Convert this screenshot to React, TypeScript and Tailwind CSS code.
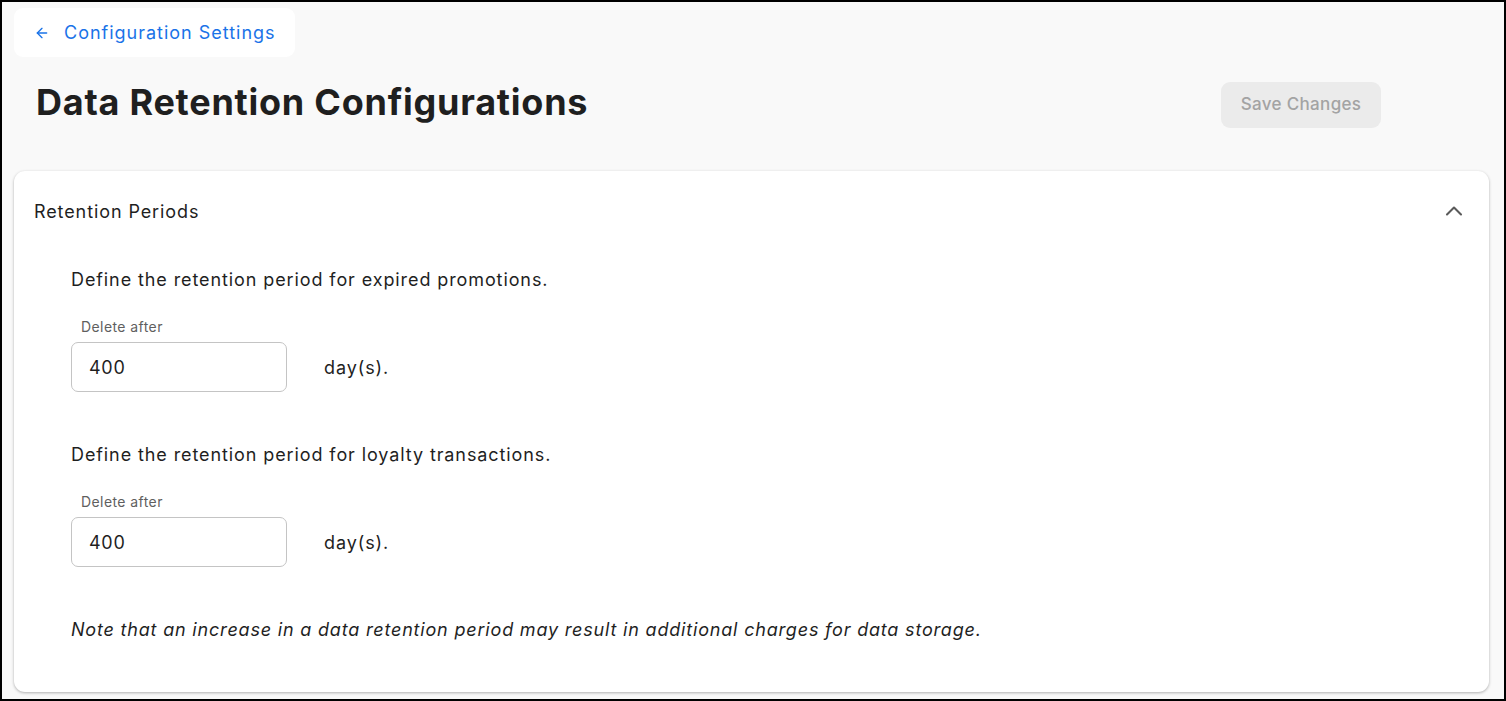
import { ArrowLeft, ChevronUp } from 'lucide-react';

type Period = {
  id: string;
  description: string;
  days: number;
};

const periods: Period[] = [
  { id: 'promotions', description: 'Define the retention period for expired promotions.', days: 400 },
  { id: 'loyalty', description: 'Define the retention period for loyalty transactions.', days: 400 },
];

function RetentionField({ period }: { period: Period }) {
  return (
    <div className="flex flex-col">
      <p className="text-[18px] leading-[28px] tracking-[0.05em] text-[#1f1f1f]">{period.description}</p>
      <label className="mt-[23px] pl-[10px] text-[14px] leading-[20px] tracking-[0.03em] text-[#5f5f5f]">
        Delete after
      </label>
      <div className="mt-[5px] flex items-center">
        <input
          type="text"
          defaultValue={period.days}
          className="h-[50px] w-[216px] rounded-[7px] border border-[#c4c4c4] bg-white px-[17px] text-[18px] tracking-[0.04em] text-[#1f1f1f] outline-none"
        />
        <span className="ml-[37px] text-[18px] tracking-[0.05em] text-[#1f1f1f]">day(s).</span>
      </div>
    </div>
  );
}

export default function App() {
  return (
    <div
      className="flex h-[701px] w-full flex-col border-2 border-black bg-[#f9f9f9]"
      style={{ fontFamily: 'Inter, "Noto Sans", sans-serif' }}
    >
      {/* Back link */}
      <div className="ml-3 mt-[6px] flex">
        <button className="flex h-[49px] items-center gap-[14px] rounded-[9px] bg-white pl-[20px] pr-[19px] text-[18px] tracking-[0.055em] text-[#1a73e8]">
          <ArrowLeft size={16} strokeWidth={2} />
          Configuration Settings
        </button>
      </div>

      {/* Title row */}
      <div className="mt-[25px] flex items-start justify-between pl-[34px] pr-[123px]">
        <h1 className="text-[36px] font-bold leading-[40px] tracking-[0.021em] text-[#1f1f1f]">
          Data Retention Configurations
        </h1>
        <button
          disabled
          className="h-[46px] w-[160px] rounded-[9px] bg-[#ebebeb] text-[17px] font-medium tracking-[0.02em] text-[#a3a3a3]"
        >
          Save Changes
        </button>
      </div>

      {/* Retention card */}
      <div className="mb-[7px] ml-3 mr-[15px] mt-[43px] flex-1 rounded-[11px] bg-white shadow-[0_1px_3px_rgba(0,0,0,0.3)]">
        <div className="flex h-[80px] items-center justify-between pl-5 pr-[21px]">
          <span className="text-[18px] tracking-[0.05em] text-[#1f1f1f]">Retention Periods</span>
          <ChevronUp size={28} strokeWidth={1.8} className="text-[#5a5a5a]" />
        </div>
        <div className="flex flex-col gap-[49px] pl-[57px] pt-[15px]">
          {periods.map((p) => (
            <RetentionField key={p.id} period={p} />
          ))}
          <p className="text-[18px] italic leading-[28px] tracking-[0.045em] text-[#1f1f1f]">
            Note that an increase in a data retention period may result in additional charges for data storage.
          </p>
        </div>
      </div>
    </div>
  );
}
